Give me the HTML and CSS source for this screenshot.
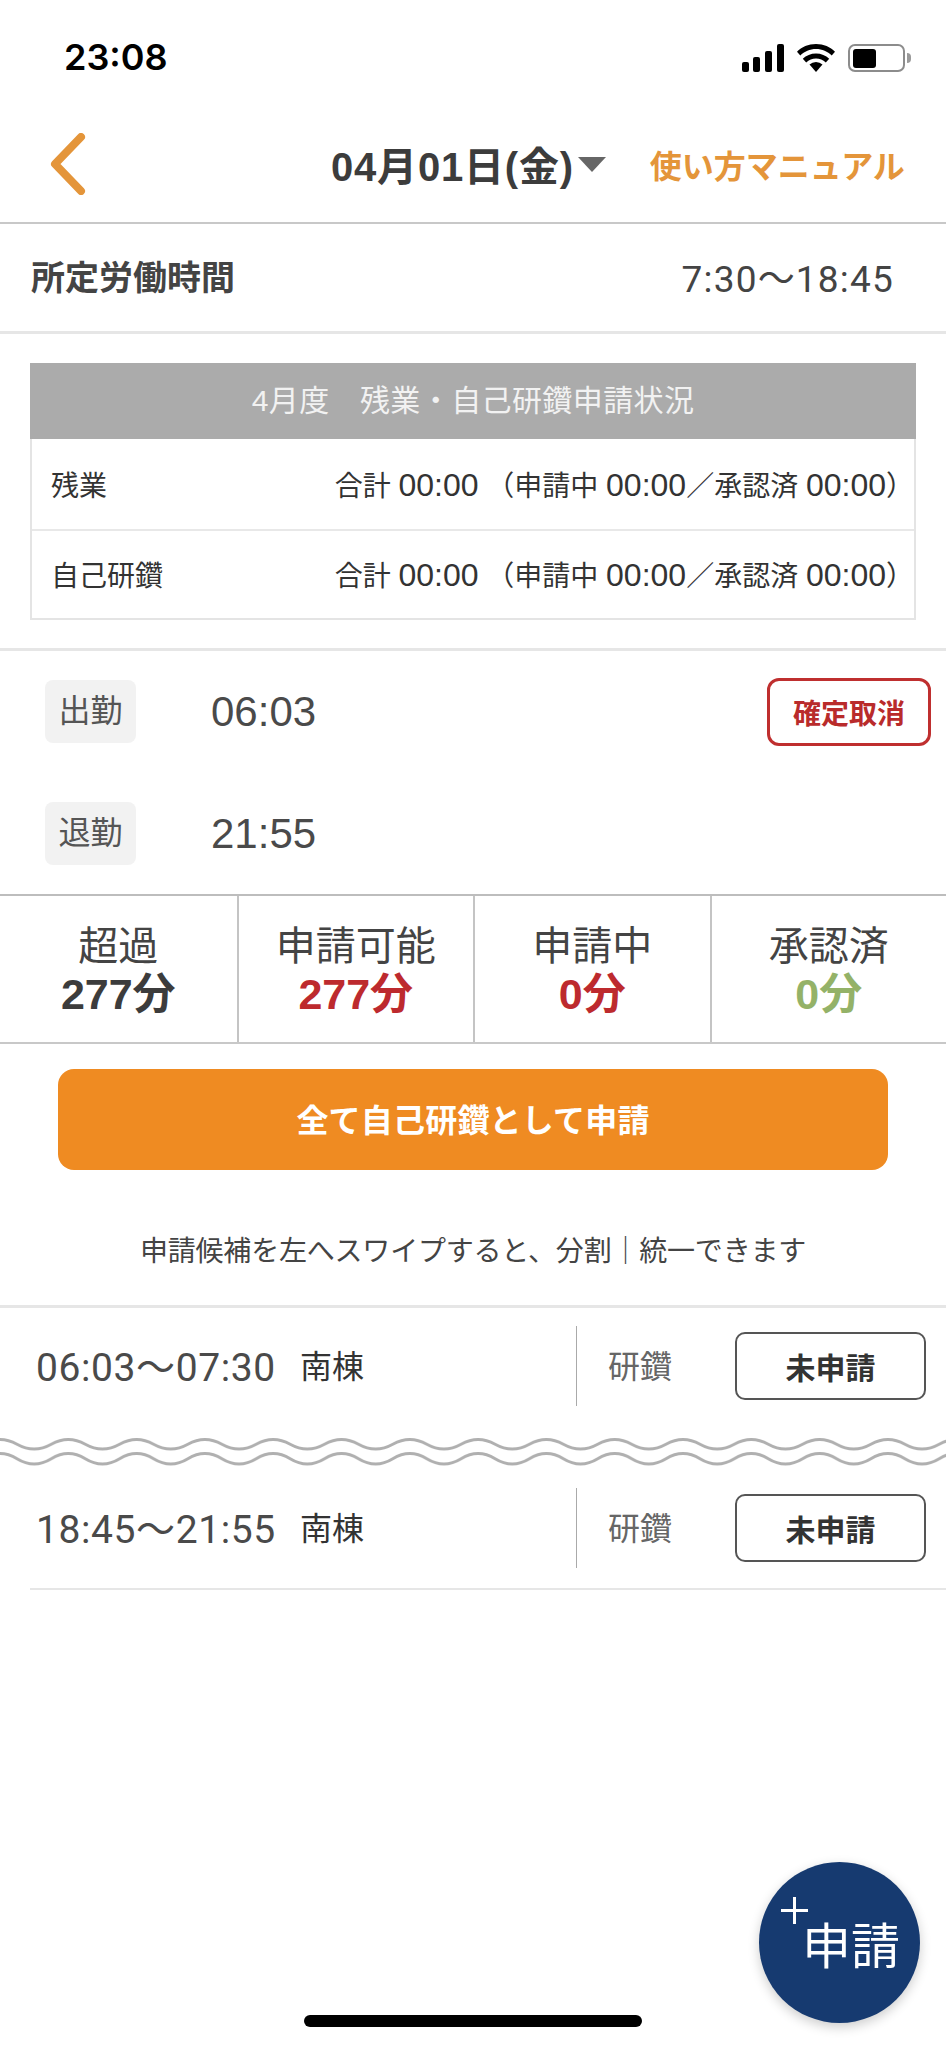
FILE: index.html
```html
<!DOCTYPE html>
<html lang="ja">
<head>
  <meta charset="UTF-8" />
  <title>04月01日</title>
  <link rel="stylesheet" href="styles.css">
</head>
<body>
  <div class="status">
    <span class="clock">23:08</span>
    <div class="status-icons">
      <svg class="signal" width="42" height="28" viewBox="0 0 42 28">
        <rect x="0" y="18" width="7" height="10" rx="2"/>
        <rect x="11" y="13" width="7" height="15" rx="2"/>
        <rect x="23" y="7" width="7" height="21" rx="2"/>
        <rect x="35" y="0" width="7" height="28" rx="2"/>
      </svg>
      <svg class="wifi" width="38" height="28" viewBox="0 0 38 28">
        <path d="M19 28l-6.5-7.5a9.5 9.5 0 0 1 13 0z"/>
        <path d="M19 9.5c5.2 0 9.8 2 13.2 5.2l-3.4 3.8A14.300 14.300 0 0 0 19 14.600a14.300 14.300 0 0 0-9.800 3.900l-3.400-3.800C9.200 11.500 13.800 9.500 19 9.500z"/>
        <path d="M19 0c7.600 0 14.400 2.900 19 7.800l-3.300 3.700C30.600 7.400 25.100 5 19 5S7.400 7.400 3.300 11.500L0 7.800C4.600 2.900 11.400 0 19 0z"/>
      </svg>
      <div class="battery"><div class="battery-fill"></div></div>
      <div class="battery-nub"></div>
    </div>
  </div>

  <div class="nav">
    <svg class="back" width="36" height="62" viewBox="0 0 36 62">
      <path d="M31 4L5 31l26 27" fill="none" stroke="#e4953a" stroke-width="8" stroke-linecap="round" stroke-linejoin="round"/>
    </svg>
    <span class="nav-date">04月01日(金)</span>
    <span class="nav-caret"></span>
    <span class="nav-link">使い方マニュアル</span>
  </div>

  <div class="hours">
    <span class="hours-label">所定労働時間</span>
    <span class="hours-time">7:30～18:45</span>
  </div>

  <div class="summary">
    <div class="summary-head">4月度　残業・自己研鑽申請状況</div>
    <div class="summary-row">
      <span>残業</span>
      <span>合計 <span class="num">00:00</span> （申請中 <span class="num">00:00</span>／承認済 <span class="num">00:00</span>）</span>
    </div>
    <div class="summary-row">
      <span>自己研鑽</span>
      <span>合計 <span class="num">00:00</span> （申請中 <span class="num">00:00</span>／承認済 <span class="num">00:00</span>）</span>
    </div>
  </div>

  <div class="attend">
    <div class="attend-row">
      <span class="attend-badge">出勤</span>
      <span class="attend-time">06:03</span>
      <button class="cancel-btn">確定取消</button>
    </div>
    <div class="attend-row">
      <span class="attend-badge">退勤</span>
      <span class="attend-time">21:55</span>
    </div>
  </div>

  <div class="stats">
    <div class="stat">
      <div class="stat-label">超過</div>
      <div class="stat-value">277分</div>
    </div>
    <div class="stat">
      <div class="stat-label">申請可能</div>
      <div class="stat-value red">277分</div>
    </div>
    <div class="stat">
      <div class="stat-label">申請中</div>
      <div class="stat-value red">0分</div>
    </div>
    <div class="stat">
      <div class="stat-label">承認済</div>
      <div class="stat-value green">0分</div>
    </div>
  </div>

  <button class="apply-all">全て自己研鑽として申請</button>

  <p class="hint">申請候補を左へスワイプすると、分割｜統一できます</p>

  <div class="slot slot-first">
    <div class="slot-main">
      <span class="slot-time">06:03～07:30</span>
      <span class="slot-place">南棟</span>
    </div>
    <span class="slot-kind">研鑽</span>
    <button class="slot-btn">未申請</button>
  </div>

  <svg class="wave" width="946" height="32">
    <defs>
      <pattern id="wavePattern" width="68.300" height="32" patternUnits="userSpaceOnUse">
        <path d="M0 3.500C17 3.500 17 13 34.150 13C51.300 13 51.300 3.500 68.300 3.500" fill="none" stroke="#b0b0b0" stroke-width="3"/>
        <path d="M0 17.500C17 17.500 17 28 34.150 28C51.300 28 51.300 17.500 68.300 17.500" fill="none" stroke="#b0b0b0" stroke-width="3"/>
      </pattern>
    </defs>
    <rect width="946" height="32" fill="url(#wavePattern)"/>
  </svg>

  <div class="slot slot-last">
    <div class="slot-main">
      <span class="slot-time">18:45～21:55</span>
      <span class="slot-place">南棟</span>
    </div>
    <span class="slot-kind">研鑽</span>
    <button class="slot-btn">未申請</button>
  </div>

  <div class="fab">
    <span class="fab-plus"></span>
    <span class="fab-text">申請</span>
  </div>
  <div class="home-bar"></div>
</body>
</html>
```

FILE: styles.css
```css
* {
  box-sizing: border-box;
}
html, body {
  margin: 0;
  height: 2048px;
  overflow: hidden;
}
body {
  position: relative;
  background-color: #fff;
  color: #333;
  font-family: "Liberation Sans", "Noto Sans CJK JP", sans-serif;
}
button {
  font-family: inherit;
  background: #fff;
  padding: 0;
}

/* status bar */
.status {
  height: 90px;
  padding: 38px 35px 0 64px;
  display: flex;
  justify-content: space-between;
  align-items: flex-start;
}
.clock {
  font-family: Inter, sans-serif;
  font-size: 36px;
  font-weight: 600;
  line-height: 38px;
  color: #000;
}
.status-icons {
  display: flex;
  align-items: center;
  margin-top: 6px;
}
.signal {
  margin-right: 13px;
}
.wifi {
  margin-right: 13px;
}
.battery {
  width: 57px;
  height: 28px;
  border: 2.5px solid #8c8c8c;
  border-radius: 7px;
  padding: 2.500px;
}
.battery-fill {
  width: 23px;
  height: 100%;
  background: #000;
  border-radius: 3px;
}
.battery-nub {
  width: 4px;
  height: 10px;
  margin-left: 2px;
  background: #9a9a9a;
  border-radius: 0 4px 4px 0;
}

/* nav */
.nav {
  height: 134px;
  display: flex;
  align-items: center;
  padding: 16px 0 0 50px;
  border-bottom: 2px solid #c8c8c8;
}
.nav-date {
  margin-left: 245px;
  font-size: 40px;
  letter-spacing: 0.8px;
  font-weight: 700;
  white-space: nowrap;
  color: #3c3c3c;
}
.nav-caret {
  margin-left: 4px;
  width: 0;
  height: 0;
  border-left: 14px solid transparent;
  border-right: 14px solid transparent;
  border-top: 15px solid #666;
}
.nav-link {
  margin-left: 44px;
  font-size: 32px;
  font-weight: 700;
  color: #e4953a;
}

/* working hours */
.hours {
  height: 110px;
  display: flex;
  justify-content: space-between;
  align-items: center;
  padding: 0 52px 4px 31px;
  border-bottom: 3px solid #e6e6e6;
}
.hours-label {
  font-size: 34px;
  font-weight: 700;
  color: #444;
}
.hours-time {
  font-family: Roboto, "Noto Sans CJK JP", sans-serif;
  font-size: 37px;
  letter-spacing: 1.2px;
  color: #444;
}

/* monthly summary */
.summary {
  margin: 29px 30px 0;
  border: 2px solid #e4e4e4;
  border-top: 0;
}
.summary-head {
  margin: 0 -2px;
  height: 76px;
  line-height: 76px;
  text-align: center;
  font-size: 30px;
  letter-spacing: 0.4px;
  background: #ababab;
  color: #f2f2f2;
}
.summary-row {
  height: 89.500px;
  display: flex;
  justify-content: space-between;
  align-items: center;
  padding: 0 0 0 19px;
  font-size: 28px;
  color: #333;
}
.summary-row + .summary-row {
  border-top: 2px solid #e8e8e8;
}
.num {
  font-size: 32px;
}

/* clock in / out */
.attend {
  margin-top: 28px;
  border-top: 3px solid #e6e6e6;
  padding: 29px 15px 29px 45px;
  display: flex;
  flex-direction: column;
  gap: 59px;
}
.attend-row {
  height: 63px;
  display: flex;
  align-items: center;
}
.attend-badge {
  width: 91px;
  height: 63px;
  line-height: 63px;
  text-align: center;
  font-size: 32px;
  color: #555;
  background: #f2f2f2;
  border-radius: 8px;
}
.attend-time {
  margin-left: 75px;
  font-size: 42px;
  color: #4a4a4a;
}
.cancel-btn {
  margin-left: auto;
  width: 164px;
  height: 68px;
  border: 3px solid #bf2f2f;
  border-radius: 12px;
  font-size: 28px;
  font-weight: 700;
  color: #b92b2b;
}

/* totals */
.stats {
  height: 150px;
  display: grid;
  grid-template-columns: repeat(4, 1fr);
  border-top: 2px solid #bdbdbd;
  border-bottom: 2px solid #c8c8c8;
}
.stat {
  text-align: center;
  padding-top: 27px;
  border-left: 2px solid #c4c4c4;
}
.stat:first-child {
  border-left: 0;
}
.stat-label {
  font-size: 40px;
  line-height: 46px;
  color: #444;
}
.stat-value {
  font-size: 43px;
  line-height: 50px;
  font-weight: 700;
  color: #3c3c3c;
}
.red {
  color: #bd2a2e;
}
.green {
  color: #94b268;
}

.apply-all {
  display: block;
  margin: 25px 0 0 58px;
  width: 830px;
  height: 101px;
  padding-bottom: 4px;
  border: 0;
  border-radius: 16px;
  background: #ef8b22;
  color: #fff;
  font-size: 32px;
  letter-spacing: 0.2px;
  font-weight: 700;
}
.hint {
  margin: 0;
  height: 135px;
  padding-top: 62px;
  text-align: center;
  font-size: 28px;
  letter-spacing: -0.2px;
  line-height: 40px;
  color: #444;
}

/* request slots */
.slot {
  display: flex;
  align-items: center;
  padding-right: 20px;
}
.slot-first {
  border-top: 3px solid #e6e6e6;
  padding-top: 18px;
}
.slot-last {
  margin-left: 30px;
  padding-bottom: 20px;
  border-bottom: 2px solid #e6e6e6;
}
.slot-main {
  width: 577px;
  height: 80px;
  display: flex;
  align-items: center;
  padding: 0 0 4px 36px;
  border-right: 1.500px solid #aaa;
}
.slot-last .slot-main {
  width: 547px;
  padding-left: 6px;
}
.slot-time {
  width: 242px;
  font-family: Roboto, "Noto Sans CJK JP", sans-serif;
  font-size: 39px;
  letter-spacing: 0.6px;
  white-space: nowrap;
  color: #4a4a4a;
}
.slot-place {
  margin-left: 22px;
  font-size: 32px;
  color: #333;
}
.slot-kind {
  margin-left: 31px;
  padding-bottom: 4px;
  font-size: 32px;
  color: #666;
}
.slot-btn {
  margin-left: auto;
  width: 191px;
  height: 68px;
  border: 2px solid #555;
  border-radius: 10px;
  font-size: 30px;
  font-weight: 700;
  color: #333;
}
.wave {
  display: block;
  margin: 30px 0 20px;
}

/* floating button */
.fab {
  position: absolute;
  left: 759px;
  top: 1862px;
  width: 161px;
  height: 161px;
  border-radius: 50%;
  background: #163a70;
  box-shadow: 0 4px 12px rgba(0, 0, 0, 0.2);
  color: #fff;
}
.fab-plus {
  position: absolute;
  left: 22px;
  top: 35px;
  width: 27px;
  height: 27px;
  background:
    linear-gradient(#fff, #fff) center / 100% 3px no-repeat,
    linear-gradient(#fff, #fff) center / 3px 100% no-repeat;
}
.fab-text {
  position: absolute;
  left: 43px;
  top: 50px;
  font-size: 49px;
  line-height: 70px;
  white-space: nowrap;
}
.home-bar {
  position: absolute;
  left: 304px;
  top: 2015px;
  width: 338px;
  height: 12px;
  border-radius: 6px;
  background: #000;
}
```
